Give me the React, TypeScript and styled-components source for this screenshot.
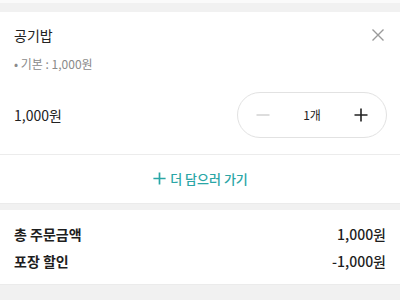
import React from "react";
import styled, { createGlobalStyle } from "styled-components";

const Global = createGlobalStyle`
  html, body { margin: 0; padding: 0; background: #f3f3f3; }
  body { font-family: "Noto Sans CJK KR", "Noto Sans", sans-serif; color: #222; }
  * { box-sizing: border-box; }
`;

const Page = styled.div`
  width: 400px;
  height: 300px;
  overflow: hidden;
  display: flex;
  flex-direction: column;
  background: #f3f3f3;
`;

const TopBand = styled.div`
  height: 14px;
  border-top: 3px solid #fafafa;
  background: #f1f1f1;
`;

const Card = styled.section`
  background: #fff;
  display: flex;
  flex-direction: column;
`;

const ItemBody = styled.div`
  padding: 12px 14px 16px 14px;
  display: flex;
  flex-direction: column;
`;

const TitleRow = styled.div`
  display: flex;
  justify-content: space-between;
  align-items: center;
  height: 22px;
`;

const Title = styled.div`
  font-size: 14px;
  color: #222;
`;

const CloseBtn = styled.div`
  width: 20px;
  height: 20px;
  margin-right: -2px;
  display: flex;
  align-items: center;
  justify-content: center;
`;

const Sub = styled.div`
  margin-top: 9px;
  font-size: 12px;
  color: #8a8a8a;
  height: 18px;
  line-height: 18px;
`;

const PriceRow = styled.div`
  margin-top: 19px;
  display: flex;
  justify-content: space-between;
  align-items: center;
`;

const Price = styled.div`
  font-size: 14px;
  color: #222;
`;

const Stepper = styled.div`
  width: 150px;
  height: 46px;
  margin-right: -1px;
  border: 1px solid #e2e2e2;
  border-radius: 23px;
  display: grid;
  grid-template-columns: 1fr 1fr 1fr;
  align-items: center;
  justify-items: center;
`;

const Qty = styled.div`
  font-size: 12px;
  color: #222;
`;

const Divider = styled.div`
  height: 1px;
  background: #ececec;
`;

const AddMore = styled.div`
  height: 48px;
  display: flex;
  align-items: center;
  justify-content: center;
  gap: 3px;
  font-size: 13px;
  color: #2aa6a6;
  font-weight: 500;
`;

const GapBand = styled.div<{ $h: number }>`
  height: ${(p) => p.$h}px;
  background: #f1f1f1;
  border-top: 1px solid #ebebeb;
`;

const Summary = styled.section`
  background: #fff;
  padding: 13px 14px 12px 14px;
  display: flex;
  flex-direction: column;
  gap: 5px;
`;

const SumRow = styled.div`
  display: flex;
  justify-content: space-between;
  align-items: center;
  height: 22px;
  font-size: 14px;
  font-weight: 700;
  color: #1e1e1e;
`;

const SumValue = styled.span`
  font-weight: 500;
`;

const Plus = ({ color, size, w }: { color: string; size: number; w: number }) => (
  <svg width={size} height={size} viewBox="0 0 16 16">
    <path d="M8 1.5V14.5M1.5 8H14.5" stroke={color} strokeWidth={w} strokeLinecap="butt" />
  </svg>
);

export default function App() {
  return (
    <Page>
      <Global />
      <TopBand />
      <Card>
        <ItemBody>
          <TitleRow>
            <Title>공기밥</Title>
            <CloseBtn>
              <svg width="14" height="14" viewBox="0 0 14 14">
                <path d="M1.5 1.5L12.5 12.5M12.5 1.5L1.5 12.5" stroke="#9a9a9a" strokeWidth="1.4" />
              </svg>
            </CloseBtn>
          </TitleRow>
          <Sub>• 기본 : 1,000원</Sub>
          <PriceRow>
            <Price>1,000원</Price>
            <Stepper>
              <svg width="16" height="16" viewBox="0 0 16 16">
                <path d="M1.5 8H14.5" stroke="#cfcfcf" strokeWidth="1.4" />
              </svg>
              <Qty>1개</Qty>
              <Plus color="#222" size={16} w={1.6} />
            </Stepper>
          </PriceRow>
        </ItemBody>
        <Divider />
        <AddMore>
          <Plus color="#2aa6a6" size={15} w={1.8} />
          <span>더 담으러 가기</span>
        </AddMore>
      </Card>
      <GapBand $h={8} />
      <Summary>
        <SumRow>
          <span>총 주문금액</span>
          <SumValue>1,000원</SumValue>
        </SumRow>
        <SumRow>
          <span>포장 할인</span>
          <SumValue>-1,000원</SumValue>
        </SumRow>
      </Summary>
      <GapBand $h={20} />
    </Page>
  );
}
